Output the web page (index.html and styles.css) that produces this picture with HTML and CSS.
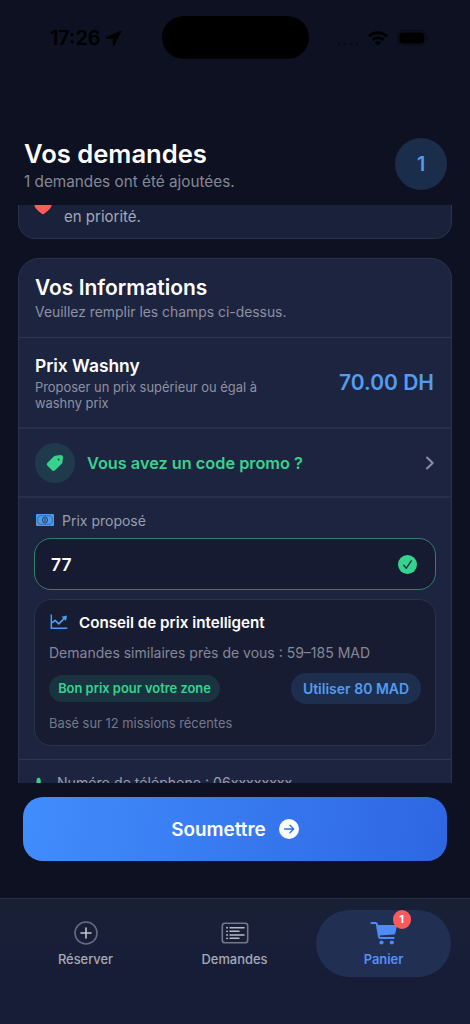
FILE: index.html
```
<!DOCTYPE html>
<html lang="fr">
<head>
<meta charset="utf-8">
<meta name="viewport" content="width=device-width, initial-scale=1">
<title>Vos demandes</title>
<link rel="stylesheet" href="styles.css">
</head>
<body>
<div class="app">
  <div class="status">
    <div class="status-left">
      <span class="time">17:26</span>
      <svg class="loc" width="17" height="17" viewBox="0 0 17 17"><path d="M15.7.7 1 7.3c-.9.4-.6 1.5.3 1.5h6.500v6.300c0 1 1.200 1.200 1.600.3L16.300 1.400c.2-.5-.1-.9-.6-.7Z"/></svg>
    </div>
    <div class="island"></div>
    <div class="status-right">
      <svg class="dots" width="24" height="6" viewBox="0 0 24 6"><circle cx="3" cy="3" r="1.600"/><circle cx="9" cy="3" r="1.600"/><circle cx="15" cy="3" r="1.600"/><circle cx="21" cy="3" r="1.600"/></svg>
      <svg class="wifi" width="20" height="15" viewBox="0 0 20 15"><g fill="none" stroke="#000" stroke-width="2.900"><path d="M1.100 5.300a12.800 12.800 0 0 1 17.800 0"/><path d="M4.500 8.900a7.900 7.900 0 0 1 11 0"/></g><path d="M10 14.500 6.900 11.400a4.400 4.400 0 0 1 6.200 0Z"/></svg>
      <svg class="battery" width="32" height="16" viewBox="0 0 32 16"><rect x=".6" y=".6" width="28" height="14.600" rx="4.800" fill="none" stroke="#000" stroke-opacity=".35"/><rect x="2.300" y="2.400" width="25" height="11" rx="3.300"/><path d="M30 5.500v5c1.600-.8 1.600-4.200 0-5Z" fill-opacity=".4"/></svg>
    </div>
  </div>

  <header class="header">
    <div>
      <h1 class="title">Vos demandes</h1>
      <p class="subtitle">1 demandes ont été ajoutées.</p>
    </div>
    <div class="count">1</div>
  </header>

  <main class="scroll">
    <section class="card notice">
      <svg class="heart" width="20" height="20" viewBox="0 0 20 20"><path d="M10 18.300c-.5 0-1-.3-1.500-.7C3.500 13.800 1 11 1 7a4.800 4.800 0 0 1 9-2.300A4.800 4.800 0 0 1 19 7c0 4-2.500 6.800-7.500 10.600-.5.400-1 .7-1.500.7Z"/></svg>
      <p class="notice-text">Votre prix sera appliqué et appelé<br>en priorité.</p>
    </section>

    <section class="card form">
      <div class="form-head">
        <h2 class="form-title">Vos Informations</h2>
        <p class="form-sub">Veuillez remplir les champs ci-dessus.</p>
      </div>
      <div class="price-row">
        <div>
          <h3 class="price-title">Prix Washny</h3>
          <p class="price-sub">Proposer un prix supérieur ou égal à<br>washny prix</p>
        </div>
        <span class="price">70.00 DH</span>
      </div>
      <div class="promo">
        <span class="promo-icon"><svg width="18" height="18" viewBox="0 0 18 18"><path fill-rule="evenodd" d="M9.300 1.700 14.500 1C16 .9 17.100 2 17 3.500l-.6 4.800c-.1.600-.3 1-.7 1.400L9 16.300c-1 1-2 1-3 0L1.500 11.700c-.9-.9-.9-2 0-2.900L7.800 2.500c.4-.4.9-.7 1.500-.8ZM12.600 4.600a.9.900 0 1 0 0 1.800.9.900 0 0 0 0-1.800Z"/></svg></span>
        <span class="promo-label">Vous avez un code promo ?</span>
        <svg class="chevron" width="10" height="14" viewBox="0 0 10 14"><path d="m2 1.500 5.700 5.500L2 12.500"/></svg>
      </div>
      <div class="offer">
        <div class="field-label">
          <svg width="18" height="12" viewBox="0 0 18 12"><rect width="18" height="12" rx="1" fill="#4d9bf0"/><path d="M3.500 1.700h11a2 2 0 0 0 1.800 1.700v5.200a2 2 0 0 0-1.800 1.700h-11a2 2 0 0 0-1.800-1.700V3.400a2 2 0 0 0 1.800-1.700Z" fill="none" stroke="#2b4c83" stroke-width=".6"/><ellipse cx="9" cy="6" rx="2.500" ry="3" fill="#4d9bf0" stroke="#1d2d55" stroke-width=".9"/><path d="M9 4.200v3.600" stroke="#1d2d55" stroke-width=".9"/></svg>
          <span>Prix proposé</span>
        </div>
        <div class="input">
          <span>77</span>
          <svg width="19" height="19" viewBox="0 0 19 19"><circle cx="9.500" cy="9.500" r="9.500" fill="#35d38e"/><path d="m5.700 10.200 2.600 3 5-7.300" fill="none" stroke="#16273a" stroke-width="1.300" stroke-linecap="round" stroke-linejoin="round"/></svg>
        </div>
        <div class="advice">
          <div class="advice-head">
            <svg width="18" height="16" viewBox="0 0 18 16"><path d="M1.300.5v13.700h16" fill="none" stroke="#4d9bf0" stroke-width="1.500"/><path d="m2 8.800 3-2.500 3.800 3.500 5.500-5.500" fill="none" stroke="#4d9bf0" stroke-width="1.700" stroke-linejoin="round"/><path d="M11.500 2.700 17 1.500l-1 5.500Z" fill="#4d9bf0"/></svg>
            <span>Conseil de prix intelligent</span>
          </div>
          <p class="advice-text">Demandes similaires près de vous : 59–185 MAD</p>
          <div class="advice-actions">
            <span class="pill pill-green">Bon prix pour votre zone</span>
            <span class="pill pill-blue">Utiliser 80 MAD</span>
          </div>
          <p class="advice-foot">Basé sur 12 missions récentes</p>
        </div>
      </div>
      <div class="phone">
        <svg width="16" height="18" viewBox="0 0 16 18"><path d="M2 1.500C3.500 0 5 .5 5.500 2.500S6 6 5 7c1 2.500 2.500 4 5 5 1.500-1 3-1 4.500 0s1 3-1 4C6 17.500-.5 9 2 1.500Z"/></svg>
        <span>Numéro de téléphone : 06xxxxxxxx</span>
      </div>
    </section>
  </main>

  <div class="submit-wrap">
    <div class="submit">
      <span>Soumettre</span>
      <svg width="20" height="20" viewBox="0 0 20 20"><circle cx="10" cy="10" r="10" fill="#fff"/><path d="M5.500 10h9M11 6.300l3.700 3.700-3.700 3.700" fill="none" stroke="#2f6fe6" stroke-width="1.300" stroke-linecap="round" stroke-linejoin="round"/></svg>
    </div>
  </div>

  <nav class="tabs">
    <div class="tab">
      <svg width="24" height="24" viewBox="0 0 24 24"><circle cx="12" cy="12" r="11" fill="none" stroke="#666b82" stroke-width="1.600"/><path d="M12 7v10M7 12h10" stroke="#c3c5cf" stroke-width="1.600" stroke-linecap="round"/></svg>
      <span>Réserver</span>
    </div>
    <div class="tab">
      <svg width="28" height="24" viewBox="0 0 28 24"><rect x="1.300" y="2.200" width="25.400" height="19.600" rx="2.600" fill="none" stroke="#73778b" stroke-width="1.600"/><path d="M9 6.700h14M9 10.300h9M9 13.900h14M9 17.300h9" stroke="#b8bac6" stroke-width="1.500" stroke-linecap="round"/><path d="M6 6.700h.1M6 10.300h.1M6 13.900h.1M6 17.300h.1" stroke="#b8bac6" stroke-width="1.800" stroke-linecap="round"/></svg>
      <span>Demandes</span>
    </div>
    <div class="tab tab-active">
      <div class="cart">
        <svg width="28" height="24" viewBox="0 0 28 24"><path d="M1.500 1.900h4.200c.6 0 1 .3 1.100.9L9 15.800c.1.700.5 1.100 1.200 1.100h13.500" fill="none" stroke="#4c8cfa" stroke-width="2" stroke-linecap="round" stroke-linejoin="round"/><path d="M7 3.900h18.800c.8 0 1.200.5 1.100 1.200l-1.400 6.700c-.2 1.100-.8 1.700-1.900 1.800L8.500 14.600Z" fill="#4c8cfa"/><circle cx="11.500" cy="21.500" r="2.100" fill="#4c8cfa"/><circle cx="21.800" cy="21.500" r="2.100" fill="#4c8cfa"/></svg>
        <span class="badge">1</span>
      </div>
      <span>Panier</span>
    </div>
  </nav>
</div>
</body>
</html>
```
FILE: styles.css
```
* { box-sizing: border-box; }
body { margin: 0; background: #0d1122; }
h1, h2, h3, p { margin: 0; font-weight: 400; }
svg { display: block; flex: none; }

.app {
  width: 470px;
  height: 1024px;
  display: flex;
  flex-direction: column;
  overflow: hidden;
  background: #0d1122;
  color: #fff;
  font-family: Inter, "Liberation Sans", sans-serif;
  white-space: nowrap;
}

.status {
  height: 125px;
  padding-top: 16px;
  display: grid;
  grid-template-columns: 162px 147px 1fr;
}
.status-left { height: 44px; padding-left: 50px; display: flex; align-items: center; gap: 5px; color: #000; }
.time { font-size: 19.800px; font-weight: 600; line-height: 46px; }
.island { height: 43px; border-radius: 22px; background: #000; }
.status-right { height: 44px; padding-left: 27px; display: flex; align-items: center; gap: 8px; }
.dots { margin-top: 11px; opacity: .3; }
.battery { margin-left: 1px; }

.header {
  height: 80px;
  padding: 13px 23px 0 24px;
  display: flex;
  justify-content: space-between;
  align-items: flex-start;
}
.title { font-size: 25.600px; line-height: 32px; font-weight: 600; }
.subtitle { margin-top: 1px; font-size: 15.300px; line-height: 22px; color: #858897; }
.count {
  width: 52px;
  height: 52px;
  border-radius: 50%;
  background: #1a2d4b;
  color: #549cf0;
  font-size: 19.500px;
  font-weight: 600;
  line-height: 53px;
  text-align: center;
}

.scroll { height: 578px; padding: 0 18px; overflow: hidden; }
.card { border: 1px solid #2d324c; background: #1d2440; }
.notice {
  height: 68px;
  margin-top: -34px;
  padding: 14px 15px;
  display: flex;
  gap: 11px;
  border-radius: 17px;
  background: #1a213b;
}
.heart { margin: 10px 0 0 -1px; fill: #ff5b5b; }
.notice-text { margin-top: 1px; font-size: 15px; line-height: 20px; color: #a5a8b6; }

.form { margin-top: 19px; height: 600px; border-radius: 21px 21px 0 0; }
.form-head { height: 79px; padding: 15px 16px 0; border-bottom: 1px solid #303650; }
.form-title { font-size: 21px; line-height: 28px; font-weight: 600; }
.form-sub { font-size: 13.900px; line-height: 20px; color: #8e91a1; }
.price-row {
  height: 91px;
  padding: 0 17px 0 16px;
  display: flex;
  justify-content: space-between;
  align-items: center;
  border-bottom: 2px solid #292f4a;
}
.price-title { font-size: 17.400px; line-height: 24px; font-weight: 600; }
.price-sub { margin-top: 2px; font-size: 12.900px; line-height: 16px; color: #8e91a1; }
.price { font-size: 21px; font-weight: 600; color: #549cf0; }
.promo {
  height: 69px;
  padding: 0 16px;
  display: flex;
  align-items: center;
  border-bottom: 2px solid #292f4a;
}
.promo-icon {
  width: 40px;
  height: 40px;
  display: grid;
  place-items: center;
  border-radius: 50%;
  background: #1f3b4b;
}
.promo-icon svg { fill: #35d38e; }
.promo-label { margin-left: 12px; font-size: 16.300px; font-weight: 600; color: #35d38e; }
.chevron { margin-left: auto; fill: none; stroke: #8d90a0; stroke-width: 2; stroke-linecap: round; stroke-linejoin: round; }

.offer { height: 262px; padding: 12px 15px 0 15px; border-bottom: 1px solid #303650; }
.field-label { height: 20px; padding-left: 2px; display: flex; align-items: center; gap: 8px; font-size: 14px; color: #9a9dac; }
.input {
  height: 52px;
  margin-top: 8px;
  padding: 0 18px 0 16px;
  display: flex;
  align-items: center;
  justify-content: space-between;
  border: 1px solid #2f8069;
  border-radius: 17px;
  background: #161b32;
  font-size: 17.500px;
  font-weight: 600;
}
.advice {
  height: 147px;
  margin-top: 9px;
  padding: 12px 14px 0 14px;
  border: 1px solid #2c314a;
  border-radius: 17px;
  background: #181c33;
}
.advice-head { height: 20px; display: flex; align-items: center; gap: 11px; font-size: 15.200px; font-weight: 600; }
.advice-head svg { margin-left: 1px; }
.advice-text { margin-top: 11px; font-size: 14px; line-height: 20px; color: #858897; }
.advice-actions { height: 32px; margin-top: 9px; display: flex; align-items: center; justify-content: space-between; }
.pill { text-align: center; }
.pill-green { width: 171px; height: 27px; border-radius: 14px; background: #1a3341; color: #35d38e; font-size: 12.900px; line-height: 27px; font-weight: 600; }
.pill-blue { width: 130px; height: 31px; border-radius: 16px; background: #1d2e4e; color: #549cf0; font-size: 14px; line-height: 31px; font-weight: 600; }
.advice-foot { margin-top: 10px; font-size: 12.900px; line-height: 20px; color: #74788a; }
.phone { padding: 13px 16px 0; display: flex; align-items: flex-start; gap: 6px; font-size: 14.100px; line-height: 20px; color: #9a9dac; }
.phone svg { margin-top: 4px; fill: #35d38e; }

.submit-wrap { height: 115px; padding: 14px 23px 0; }
.submit {
  height: 64px;
  display: flex;
  align-items: center;
  justify-content: center;
  gap: 13px;
  border-radius: 20px;
  background: linear-gradient(100deg, #418dfd, #2e66e2);
  font-size: 18.900px;
  font-weight: 600;
}

.tabs {
  height: 126px;
  padding: 11px 19px 0 18px;
  display: grid;
  grid-template-columns: repeat(3, 1fr);
  column-gap: 14px;
  border-top: 1px solid #2a2f41;
  background: linear-gradient(#182036, #171d37 60%);
}
.tab {
  height: 67px;
  padding-top: 11px;
  display: flex;
  flex-direction: column;
  align-items: center;
  gap: 6px;
  font-size: 12.900px;
  line-height: 18px;
  font-weight: 500;
  color: #a6a9b6;
}
.tab-active { border-radius: 34px; background: #202f52; color: #5490fa; font-weight: 600; }
.cart { position: relative; }
.badge {
  position: absolute;
  top: -11px;
  left: 23px;
  width: 18px;
  height: 19px;
  border-radius: 10px;
  background: #fb5a5c;
  color: #fff;
  font-size: 11px;
  line-height: 19px;
  font-weight: 700;
  text-align: center;
}
```
